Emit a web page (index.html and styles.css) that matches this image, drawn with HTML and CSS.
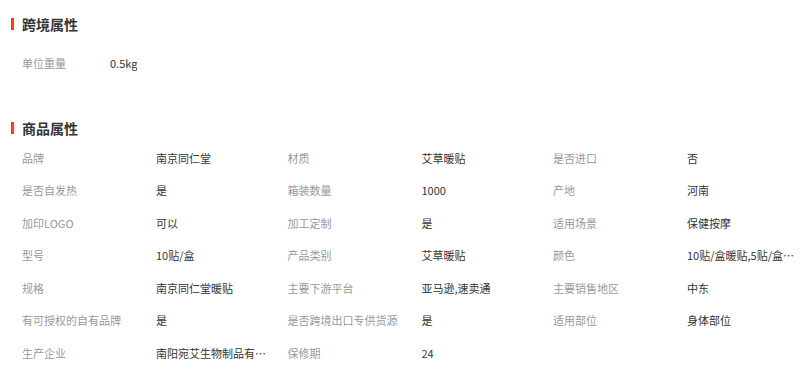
FILE: index.html
```html
<!DOCTYPE html>
<html lang="zh">
<head>
<meta charset="utf-8">
<link rel="stylesheet" href="styles.css">
</head>
<body>
<div class="page">
  <section class="section section-cross">
    <h2 class="title">跨境属性</h2>
    <div class="simple-row">
      <span class="label label-short">单位重量</span>
      <span class="value">0.5kg</span>
    </div>
  </section>
  <section class="section section-goods">
    <h2 class="title">商品属性</h2>
    <div class="grid">
      <div class="cell"><span class="label">品牌</span><span class="value">南京同仁堂</span></div>
      <div class="cell"><span class="label">材质</span><span class="value">艾草暖贴</span></div>
      <div class="cell"><span class="label">是否进口</span><span class="value">否</span></div>
      <div class="cell"><span class="label">是否自发热</span><span class="value">是</span></div>
      <div class="cell"><span class="label">箱装数量</span><span class="value">1000</span></div>
      <div class="cell"><span class="label">产地</span><span class="value">河南</span></div>
      <div class="cell"><span class="label">加印LOGO</span><span class="value">可以</span></div>
      <div class="cell"><span class="label">加工定制</span><span class="value">是</span></div>
      <div class="cell"><span class="label">适用场景</span><span class="value">保健按摩</span></div>
      <div class="cell"><span class="label">型号</span><span class="value">10贴/盒</span></div>
      <div class="cell"><span class="label">产品类别</span><span class="value">艾草暖贴</span></div>
      <div class="cell"><span class="label">颜色</span><span class="value">10贴/盒暖贴,5贴/盒暖贴</span></div>
      <div class="cell"><span class="label">规格</span><span class="value">南京同仁堂暖贴</span></div>
      <div class="cell"><span class="label">主要下游平台</span><span class="value">亚马逊,速卖通</span></div>
      <div class="cell"><span class="label">主要销售地区</span><span class="value">中东</span></div>
      <div class="cell"><span class="label">有可授权的自有品牌</span><span class="value">是</span></div>
      <div class="cell"><span class="label">是否跨境出口专供货源</span><span class="value">是</span></div>
      <div class="cell"><span class="label">适用部位</span><span class="value">身体部位</span></div>
      <div class="cell"><span class="label">生产企业</span><span class="value">南阳宛艾生物制品有限公司</span></div>
      <div class="cell"><span class="label">保修期</span><span class="value">24</span></div>
    </div>
  </section>
</div>
</body>
</html>
```

FILE: styles.css
```css
* { box-sizing: border-box; }
html, body {
  margin: 0;
  padding: 0;
  background: #fff;
}
body {
  font-family: "Noto Sans CJK SC", "Noto Sans", sans-serif;
  font-size: 11px;
  color: #333;
}
.page {
  padding: 14px 0 0 11px;
}
.title {
  margin: 0;
  height: 20px;
  line-height: 20px;
  font-size: 14px;
  font-weight: bold;
  color: #333;
  display: flex;
  align-items: center;
  gap: 8px;
}
.title::before {
  content: "";
  width: 3px;
  height: 12px;
  background: #ff4000;
}
.section-cross .simple-row {
  margin-top: 13px;
  padding-left: 11px;
  height: 32.5px;
  display: flex;
  align-items: center;
}
.label {
  color: #999;
  flex: 0 0 134px;
  white-space: nowrap;
}
.label-short {
  flex-basis: 88px;
}
.value {
  color: #333;
  white-space: nowrap;
  overflow: hidden;
  text-overflow: ellipsis;
  max-width: 112px;
}
.section-goods {
  margin-top: 38px;
}
.grid {
  margin-top: 4px;
  padding-left: 11px;
  display: grid;
  grid-template-columns: repeat(3, 265.5px);
  grid-auto-rows: 32.5px;
}
.cell {
  display: flex;
  align-items: center;
  min-width: 0;
}
```
